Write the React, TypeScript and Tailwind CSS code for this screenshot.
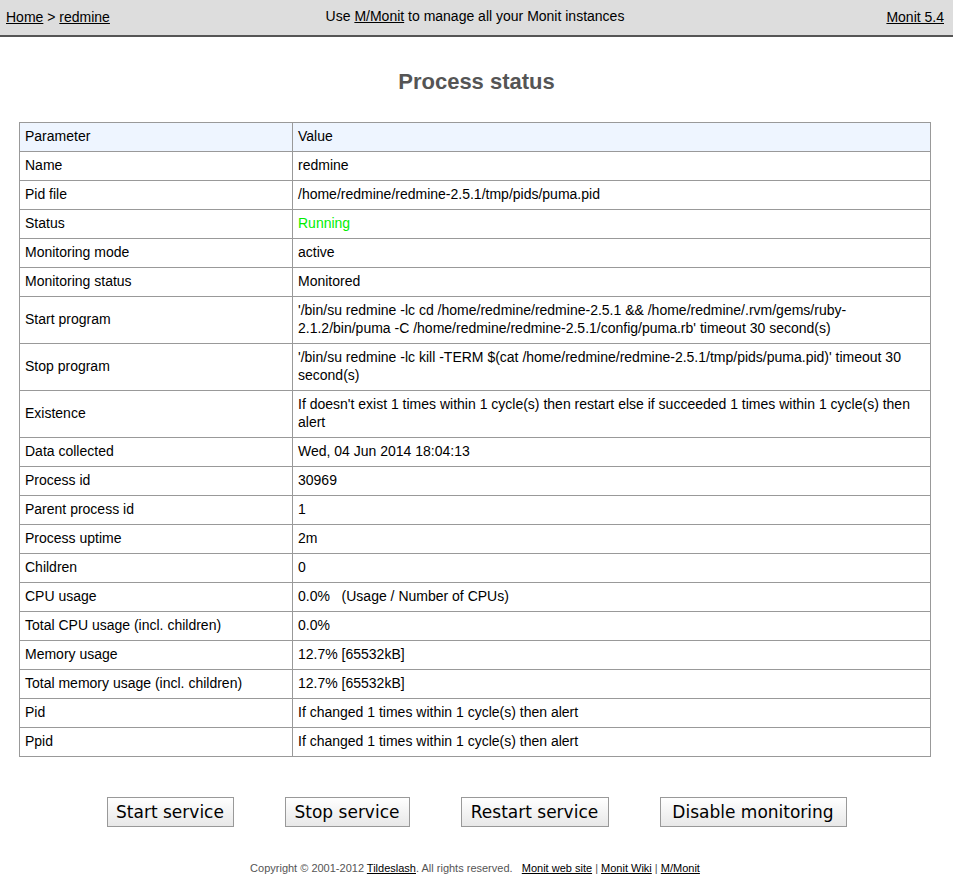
const rows: [string, React.ReactNode][] = [
  ["Name", "redmine"],
  ["Pid file", "/home/redmine/redmine-2.5.1/tmp/pids/puma.pid"],
  ["Status", <span className="text-[#00ee00]">Running</span>],
  ["Monitoring mode", "active"],
  ["Monitoring status", "Monitored"],
  [
    "Start program",
    "'/bin/su redmine -lc cd /home/redmine/redmine-2.5.1 && /home/redmine/.rvm/gems/ruby-2.1.2/bin/puma -C /home/redmine/redmine-2.5.1/config/puma.rb' timeout 30 second(s)",
  ],
  [
    "Stop program",
    "'/bin/su redmine -lc kill -TERM $(cat /home/redmine/redmine-2.5.1/tmp/pids/puma.pid)' timeout 30 second(s)",
  ],
  [
    "Existence",
    "If doesn't exist 1 times within 1 cycle(s) then restart else if succeeded 1 times within 1 cycle(s) then alert",
  ],
  ["Data collected", "Wed, 04 Jun 2014 18:04:13"],
  ["Process id", "30969"],
  ["Parent process id", "1"],
  ["Process uptime", "2m"],
  ["Children", "0"],
  ["CPU usage", <>0.0% &nbsp; (Usage / Number of CPUs)</>],
  ["Total CPU usage (incl. children)", "0.0%"],
  ["Memory usage", "12.7% [65532kB]"],
  ["Total memory usage (incl. children)", "12.7% [65532kB]"],
  ["Pid", "If changed 1 times within 1 cycle(s) then alert"],
  ["Ppid", "If changed 1 times within 1 cycle(s) then alert"],
];

const buttons = [
  { label: "Start service", w: "w-[127px]" },
  { label: "Stop service", w: "w-[125px]" },
  { label: "Restart service", w: "w-[148px]" },
  { label: "Disable monitoring", w: "w-[187px]" },
];

const cell = "border border-[#999] px-[5px] pt-[4px] pb-[6px] align-middle leading-[18px]";

export default function App() {
  return (
    <div className="min-h-[895px] bg-white font-['Liberation_Sans',Arial,sans-serif] text-[14px] text-black">
      {/* Header bar */}
      <div className="grid h-[37px] grid-cols-[1fr_auto_1fr] items-center border-b-2 border-[#555] bg-[#dddddd] pl-[6px] pr-[9px]">
        <div>
          <a className="underline">Home</a> &gt; <a className="underline">redmine</a>
        </div>
        <div className="-translate-y-[1px]">
          Use <a className="underline">M/Monit</a> to manage all your Monit instances
        </div>
        <div className="text-right">
          <a className="underline">Monit 5.4</a>
        </div>
      </div>

      <h1 className="mt-[30px] text-center text-[22px] font-bold leading-[30px] text-[#555]">
        Process status
      </h1>

      <div className="mx-[19px] mt-[25px] w-[912px]">
        <table className="w-full border-collapse">
          <thead>
            <tr className="bg-[#eef5ff]">
              <th className={`w-[273px] text-left font-normal ${cell}`}>Parameter</th>
              <th className={`text-left font-normal ${cell}`}>Value</th>
            </tr>
          </thead>
          <tbody>
            {rows.map(([k, v]) => (
              <tr key={k}>
                <td className={cell}>{k}</td>
                <td className={cell}>{v}</td>
              </tr>
            ))}
          </tbody>
        </table>
      </div>

      <div className="mt-[40px] flex justify-center gap-[51px]">
        {buttons.map((b) => (
          <button
            key={b.label}
            className={`h-[30px] ${b.w} border border-[#999] bg-gradient-to-b from-white to-[#e8e8e8] font-['DejaVu_Sans',sans-serif] text-[17px] leading-[28px] text-black`}
          >
            {b.label}
          </button>
        ))}
      </div>

      <div className="mt-[33px] pr-[3px] text-center text-[11px] text-[#555]">
        Copyright © 2001-2012 <a className="text-black underline">Tildeslash</a>. All rights reserved.{" "}
        &nbsp;&nbsp;<a className="text-black underline">Monit web site</a> |{" "}
        <a className="text-black underline">Monit Wiki</a> | <a className="text-black underline">M/Monit</a>
      </div>
    </div>
  );
}
